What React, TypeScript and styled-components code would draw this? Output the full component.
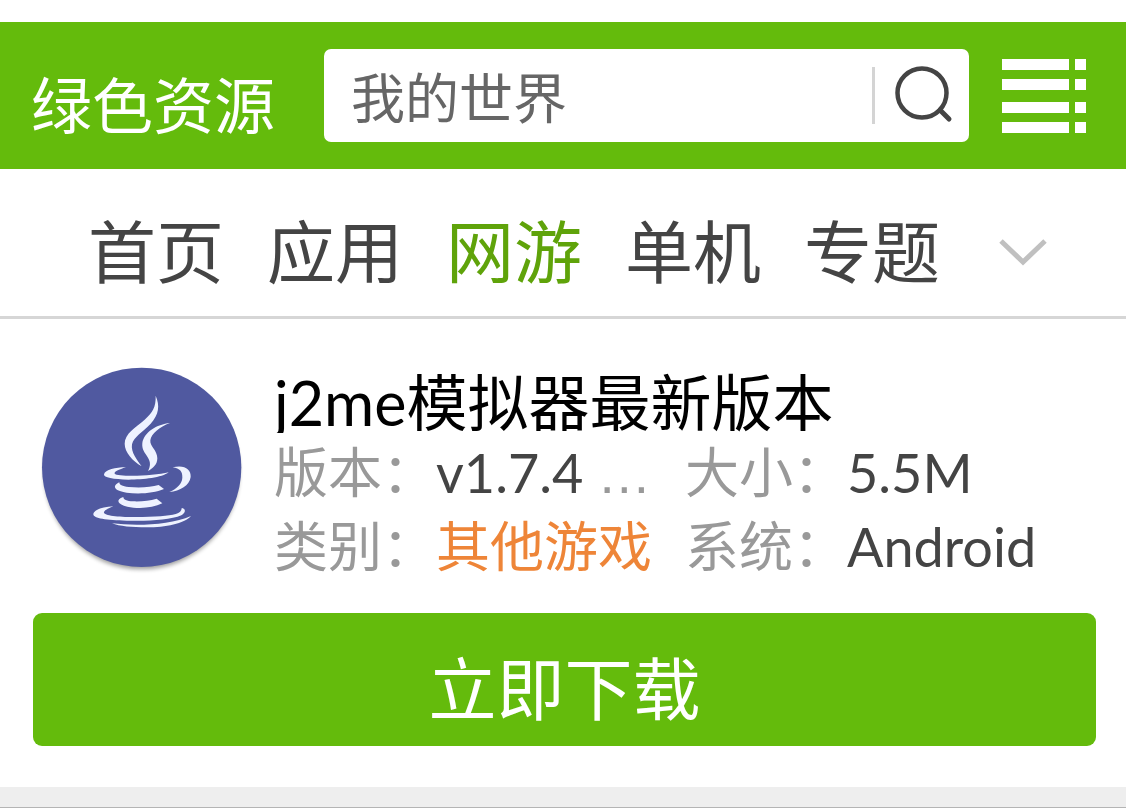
import React from "react";
import styled, { createGlobalStyle } from "styled-components";

const green = "#64bb0c";

const GlobalStyle = createGlobalStyle`
  *, *::before, *::after { box-sizing: border-box; }
  body {
    margin: 0;
    background: #fff;
    color: #444;
    font-family: Lato, "Noto Sans CJK SC", sans-serif;
  }
  a { color: inherit; text-decoration: none; }
  button { border: 0; padding: 0; background: none; font: inherit; color: inherit; cursor: pointer; }
`;

const Page = styled.div`
  padding-top: 22px;
`;

const Header = styled.header`
  display: flex;
  align-items: center;
  height: 147px;
  padding: 0 40px 0 31px;
  background: ${green};
`;

const Brand = styled.a`
  flex: none;
  padding-top: 20px;
  margin-right: 49px;
  color: #fff;
  font-size: 61px;
  line-height: 72px;
`;

const SearchForm = styled.form`
  display: flex;
  align-items: center;
  flex: 1;
  min-width: 0;
  height: 93px;
  padding: 0 14px 0 27px;
  margin-right: 33px;
  border-radius: 7px;
  background: #fff;
`;

const SearchInput = styled.input`
  flex: 1;
  min-width: 0;
  height: 80px;
  padding: 0;
  border: 0;
  outline: 0;
  background: none;
  color: #666;
  font: inherit;
  font-size: 54px;
`;

const SearchButton = styled.button`
  display: flex;
  align-items: center;
  height: 57px;
  padding-left: 20px;
  border-left: 3px solid #d4d4d4;
`;

const MenuButton = styled.button`
  display: flex;
  flex: none;
`;

const Nav = styled.nav`
  display: flex;
  align-items: center;
  justify-content: space-between;
  height: 150px;
  padding: 18px 79px 0 88px;
  border-bottom: 3px solid #d6d6d6;
`;

const NavLinks = styled.div`
  display: flex;
  gap: 43px;
`;

const NavLink = styled.a<{ $active?: boolean }>`
  color: ${(p) => (p.$active ? "#5fa30a" : "#444")};
  font-size: 68px;
  line-height: 80px;
`;

const AppInfo = styled.section`
  display: flex;
  gap: 31px;
  padding: 47px 30px 0 41px;
`;

const AppText = styled.div`
  flex: 1;
  min-width: 0;
  padding-top: 6px;
`;

const Title = styled.h1`
  margin: 0;
  overflow: hidden;
  color: #000;
  font-size: 61px;
  font-weight: 400;
  line-height: 61px;
  white-space: nowrap;
`;

const Facts = styled.dl`
  display: grid;
  grid-template-columns: 411px 1fr;
  margin: 3px 0 0;
`;

const Fact = styled.div`
  display: flex;
  font-size: 54px;
  line-height: 74px;
  white-space: nowrap;
`;

const FactLabel = styled.dt`
  color: #999;
`;

const FactValue = styled.dd<{ $accent?: boolean }>`
  margin: 0;
  color: ${(p) => (p.$accent ? "#ee8538" : "#444")};
`;

const Ellipsis = styled.span`
  color: #999;
  font-family: "Liberation Sans", sans-serif;
  line-height: 1;
`;

const DownloadButton = styled.button`
  display: block;
  width: calc(100% - 63px);
  height: 133px;
  margin: 29px 30px 41px 33px;
  padding-top: 18px;
  border-radius: 9px;
  background: ${green};
  color: #fff;
  font-size: 68px;
  line-height: 80px;
`;

const Divider = styled.div`
  height: 21px;
  border-bottom: 1px solid #b4b4b4;
  background: #eee;
`;

const SearchIcon = () => (
  <svg width="60" height="60" viewBox="0 0 60 60" fill="none" stroke="#444" strokeLinecap="round" aria-hidden="true">
    <circle cx="27" cy="27" r="24.5" strokeWidth="4.5" />
    <path d="M45 44L54 53" strokeWidth="5" />
  </svg>
);

const MenuIcon = () => (
  <svg width="84" height="74" viewBox="0 0 84 74" fill="#fff" aria-hidden="true">
    {[0, 20, 43, 63].map((y) => (
      <React.Fragment key={y}>
        <rect x="0" y={y} width="67" height="11" />
        <rect x="73" y={y} width="11" height="11" />
      </React.Fragment>
    ))}
  </svg>
);

const ChevronIcon = () => (
  <svg width="48" height="28" viewBox="0 0 48 28" fill="none" stroke="#c0c0c0" strokeWidth="5" aria-hidden="true">
    <path d="M2 3L24 24L46 3" />
  </svg>
);

const JavaLogo = () => (
  <svg width="202" height="208" viewBox="33 33 606 624" role="img" aria-label="Java">
    <defs>
      <filter id="discShadow" x="-10%" y="-10%" width="120%" height="120%">
        <feGaussianBlur stdDeviation="6" />
      </filter>
    </defs>
    <circle cx="335" cy="350" r="293" fill="#000" opacity="0.38" filter="url(#discShadow)" />
    <circle cx="335" cy="337" r="299" fill="#5059a0" />
    <g fill="#eef2ff">
      <path d="M377 122C390 152 387 178 362 206C338 232 312 244 306 268C302 292 322 316 335 334C308 318 284 292 284 266C284 236 316 218 344 194C368 172 378 156 377 122Z" />
      <path d="M420 204C388 216 364 236 361 256C359 274 382 286 382 310C382 330 368 340 354 348C362 332 362 322 354 308C344 292 335 284 337 264C342 232 380 208 420 204Z" />
      <path d="M288 337C266 344 252 350 254 356C262 366 370 364 416 352C396 368 340 374 296 374C250 373 220 368 222 358C226 344 256 337 288 337Z" />
      <path d="M428 337C462 328 484 342 482 366C479 392 450 408 418 411C442 400 456 386 457 368C458 350 450 340 428 337Z" />
      <path d="M268 382C268 390 276 394 296 396C330 399 362 397 386 390L402 402C372 415 326 418 290 413C254 408 244 394 268 382Z" />
      <path d="M280 426C280 434 290 438 310 439C336 440 358 437 380 431L397 445C368 460 324 462 292 455C262 448 256 434 280 426Z" />
      <path d="M250 454C230 462 220 468 222 474C232 488 330 488 392 484C430 481 456 476 455 459C468 460 468 474 454 481C420 496 350 499 290 497C230 496 190 490 190 478C190 466 216 455 250 454Z" />
      <path d="M246 505C320 514 420 510 483 483C462 506 408 517 350 517C306 517 268 514 246 505Z" />
    </g>
  </svg>
);

const navItems = ["首页", "应用", "网游", "单机", "专题"];

export default function App() {
  return (
    <Page>
      <GlobalStyle />
      <Header>
        <Brand href="#">绿色资源</Brand>
        <SearchForm role="search" onSubmit={(e) => e.preventDefault()}>
          <SearchInput type="text" defaultValue="我的世界" aria-label="搜索" />
          <SearchButton type="submit" aria-label="搜索">
            <SearchIcon />
          </SearchButton>
        </SearchForm>
        <MenuButton type="button" aria-label="菜单">
          <MenuIcon />
        </MenuButton>
      </Header>
      <Nav>
        <NavLinks>
          {navItems.map((item) => (
            <NavLink key={item} href="#" $active={item === "网游"}>
              {item}
            </NavLink>
          ))}
        </NavLinks>
        <MenuButton type="button" aria-label="展开">
          <ChevronIcon />
        </MenuButton>
      </Nav>
      <main>
        <AppInfo>
          <JavaLogo />
          <AppText>
            <Title>j2me模拟器最新版本</Title>
            <Facts>
              <Fact>
                <FactLabel>版本：</FactLabel>
                <FactValue>
                  v1.7.4 <Ellipsis>…</Ellipsis>
                </FactValue>
              </Fact>
              <Fact>
                <FactLabel>大小：</FactLabel>
                <FactValue>5.5M</FactValue>
              </Fact>
              <Fact>
                <FactLabel>类别：</FactLabel>
                <FactValue $accent>
                  <a href="#">其他游戏</a>
                </FactValue>
              </Fact>
              <Fact>
                <FactLabel>系统：</FactLabel>
                <FactValue>Android</FactValue>
              </Fact>
            </Facts>
          </AppText>
        </AppInfo>
        <DownloadButton type="button">立即下载</DownloadButton>
      </main>
      <Divider />
    </Page>
  );
}
